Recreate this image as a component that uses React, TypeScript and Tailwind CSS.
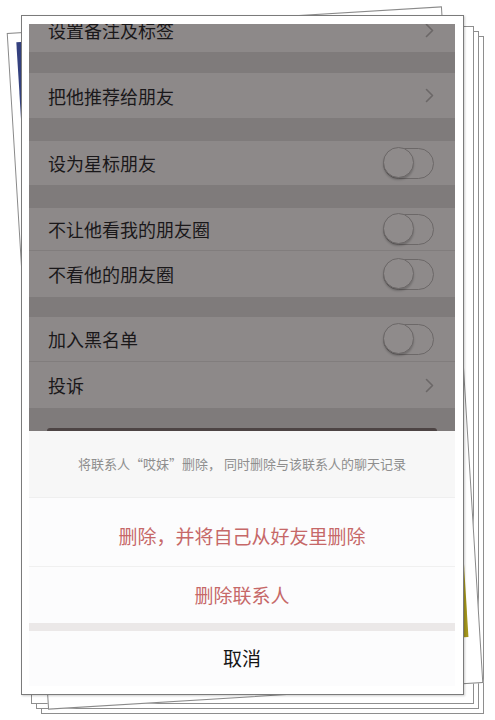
import { ReactNode } from "react";

const Chevron = () => (
  <svg width="9" height="15" viewBox="0 0 9 15" fill="none">
    <path d="M1.5 1.5l6 6-6 6" stroke="#6b6767" strokeWidth="1.6" strokeLinecap="round" strokeLinejoin="round" />
  </svg>
);

const Toggle = () => (
  <div className="relative h-[31px] w-[51px] rounded-full border-[1.5px] border-[#6c6868] bg-[#8e8a8a]">
    <div className="absolute left-[-1.5px] top-[-1.5px] h-[31px] w-[31px] rounded-full border-[1.5px] border-[#6c6868] bg-[#8f8b8b] shadow-[0px_2px_2px_rgba(0,0,0,0.2)]" />
  </div>
);

const Row = ({ label, h, right, line }: { label: string; h: string; right?: ReactNode; line?: boolean }) => (
  <div className={`flex shrink-0 items-center justify-between bg-[#8d8989] pl-[19px] pr-[21px] ${h} ${line ? "border-b border-[#817d7d]" : ""}`}>
    <span className="text-[18px] leading-none text-[#1a181a]">{label}</span>
    {right}
  </div>
);

const Gap = ({ h }: { h: string }) => <div className={`shrink-0 bg-[#7f7b7b] ${h}`} />;

export default function App() {
  return (
    <div className="relative h-[720px] w-[495px] overflow-hidden bg-white font-['Noto_Sans_CJK_SC',sans-serif]">
      {/* prints stacked underneath */}
      <div className="absolute left-[41px] top-[36px] h-[678px] w-[443px] border border-[#8e8e8e] bg-white" />
      <div className="absolute left-[36px] top-[31px] h-[678px] w-[443px] border border-[#8e8e8e] bg-white" />
      <div className="absolute left-[31px] top-[26px] h-[678px] w-[443px] border border-[#8e8e8e] bg-white" />

      {/* tilted print */}
      <div className="absolute left-[27px] top-[19px] h-[678px] w-[436px] rotate-[-3.5deg] border border-[#8a8a8a] bg-white pt-[9px] pr-[11px] pb-[46px] pl-[8px]">
        <div className="h-full w-full bg-[linear-gradient(90deg,#34417f_0%,#3d4a86_25%,#8f8a5a_55%,#a4961d_75%,#a4961d_100%)]" />
      </div>

      {/* top print with the screenshot */}
      <div className="absolute left-[21px] top-[15px] flex h-[680px] w-[443px] flex-col border border-[#7b7b7b] bg-white pt-[8px] pr-[8px] pb-[8px] pl-[7px] shadow-[1px_1px_2px_rgba(0,0,0,0.2)]">
        <div className="flex flex-1 flex-col overflow-hidden">
          {/* dimmed settings list */}
          <div className="flex h-[407px] shrink-0 flex-col overflow-hidden">
            <div className="mt-[-16px]" />
            <Row label="设置备注及标签" h="h-[44px]" right={<Chevron />} />
            <Gap h="h-[21px]" />
            <Row label="把他推荐给朋友" h="h-[45px]" right={<Chevron />} />
            <Gap h="h-[23px]" />
            <Row label="设为星标朋友" h="h-[44px]" right={<Toggle />} />
            <Gap h="h-[23px]" />
            <Row label="不让他看我的朋友圈" h="h-[43px]" right={<Toggle />} line />
            <Row label="不看他的朋友圈" h="h-[46px]" right={<Toggle />} />
            <Gap h="h-[20px]" />
            <Row label="加入黑名单" h="h-[45px]" right={<Toggle />} line />
            <Row label="投诉" h="h-[46px]" right={<Chevron />} />
            <div className="flex h-[23px] shrink-0 flex-col justify-end bg-[#7f7b7b]">
              <div className="mx-[18px] h-[3px] rounded-t-[6px] bg-[#4d4444]" />
            </div>
          </div>

          {/* action sheet */}
          <div className="flex flex-1 flex-col">
            <div className="flex h-[67px] shrink-0 items-center justify-center border-b border-[#efefef] bg-[#f7f7f7] text-[13px] text-[#8e8e8e]">
              将联系人“哎妹”删除， 同时删除与该联系人的聊天记录
            </div>
            <div className="flex h-[69px] shrink-0 items-center justify-center border-b border-[#f0f0f0] bg-[#fcfcfd] pt-[8px] text-[19px] text-[#c66868]">
              删除，并将自己从好友里删除
            </div>
            <div className="flex h-[56px] shrink-0 items-center justify-center bg-[#fcfcfd] text-[19px] text-[#c66868]">
              删除联系人
            </div>
            <div className="h-[8px] shrink-0 bg-[#ebe8e8]" />
            <div className="flex flex-1 items-center justify-center bg-[#fcfcfd] text-[19px] text-[#141414]">
              取消
            </div>
          </div>
        </div>
      </div>
    </div>
  );
}
